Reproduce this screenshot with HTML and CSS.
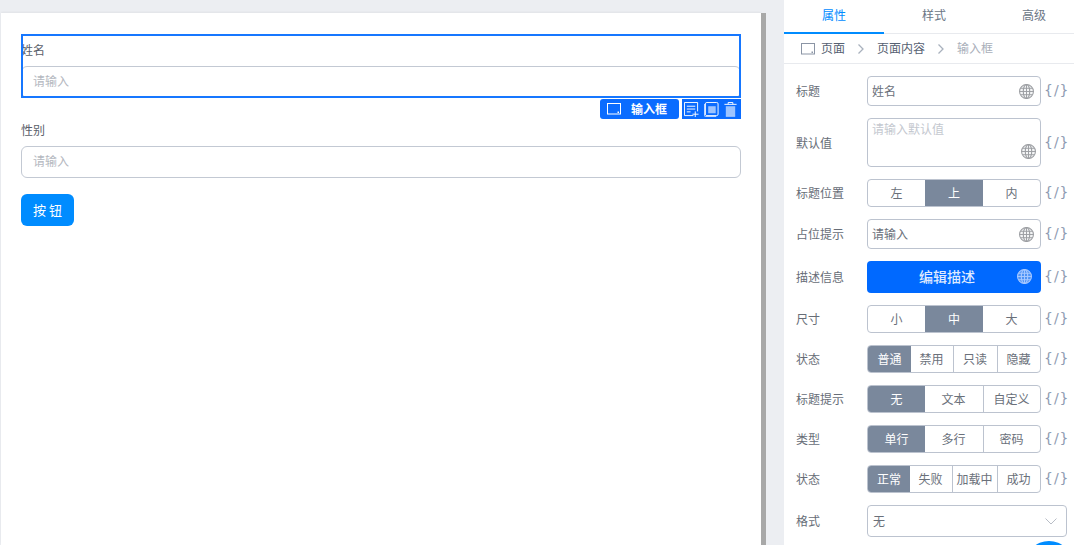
FILE: index.html
```html
<!DOCTYPE html>
<html lang="zh-CN">
<head>
<meta charset="utf-8">
<title>表单编辑器</title>
<link rel="stylesheet" href="styles.css">
</head>
<body>
<svg class="defs" width="0" height="0" aria-hidden="true">
  <symbol id="globe" viewBox="1 1 14 14">
    <circle cx="8" cy="8" r="6.500" fill="#dfe1e4" fill-opacity=".35" stroke="currentColor"/>
    <ellipse cx="8" cy="8" rx="3" ry="6.500" fill="none" stroke="currentColor"/>
    <path d="M8 1.500v13M2.500 5h11M1.500 8h13M2.500 11h11" fill="none" stroke="currentColor" stroke-width=".9"/>
  </symbol>
  <symbol id="frame" viewBox="0 0 14 12">
    <rect x=".5" y=".5" width="13" height="10.500" fill="none" stroke="currentColor"/>
    <rect x="10.500" y="8.500" width="1.500" height="1.500" fill="currentColor"/>
  </symbol>
  <symbol id="chev" viewBox="0 0 8 12">
    <path d="M1.500 1.500 6 6l-4.500 4.500" fill="none" stroke="currentColor" stroke-width="1.300"/>
  </symbol>
</svg>
<div class="app">
  <main class="canvas">
    <div class="field selected-field">
      <div class="field-label">姓名</div>
      <div class="text-input">请输入</div>
      <div class="selection">
        <div class="toolbar">
          <div class="tool-name"><svg class="tool-frame"><use href="#frame"/></svg><span>输入框</span></div>
          <div class="tool-actions">
            <svg class="tool-icon" viewBox="0 0 16 16"><path d="M10 14.500H.5V.5h14V10M3 4.500h9M3 7.500h9M3 10.500h4M12 10v6M9 13h6.500" fill="none" stroke="currentColor"/></svg>
            <svg class="tool-icon" viewBox="0 0 16 16"><rect x="1.500" y=".5" width="13.500" height="14" rx="1.500" fill="none" stroke="currentColor"/><path d="M.5 2v12.500q0 1 1 1H13" stroke="#cfe0ff" fill="none"/><rect x="4.500" y="4.500" width="8" height="7.500" fill="#9cc4ff"/></svg>
            <svg class="tool-icon" viewBox="0 0 16 16"><path d="M1.500 2.500h13M5.500 2.500V.5h5v2" fill="none" stroke="currentColor"/><path d="M3 4.500h10v10H3z" fill="#9cc4ff"/><path d="M3 15h10" stroke="currentColor"/></svg>
          </div>
        </div>
      </div>
    </div>
    <div class="field">
      <div class="field-label">性别</div>
      <div class="text-input">请输入</div>
    </div>
    <button class="primary-button">按 钮</button>
  </main>
  <div class="scrollbar"></div>
  <aside class="panel">
    <nav class="tabs">
      <div class="tab active">属性</div>
      <div class="tab">样式</div>
      <div class="tab">高级</div>
    </nav>
    <div class="crumbs">
      <svg class="crumb-frame"><use href="#frame"/></svg>
      <span class="crumb">页面</span>
      <svg class="crumb-chev"><use href="#chev"/></svg>
      <span class="crumb">页面内容</span>
      <svg class="crumb-chev"><use href="#chev"/></svg>
      <span class="crumb current">输入框</span>
    </div>
    <div class="props">
      <div class="row h30">
        <label class="prop-label">标题</label>
        <div class="box"><span>姓名</span><svg class="globe"><use href="#globe"/></svg></div>
        <span class="code">{/}</span>
      </div>
      <div class="row h49">
        <label class="prop-label">默认值</label>
        <div class="box area"><span class="ph">请输入默认值</span><svg class="globe"><use href="#globe"/></svg></div>
        <span class="code">{/}</span>
      </div>
      <div class="row h28">
        <label class="prop-label">标题位置</label>
        <div class="seg three"><span>左</span><span class="on">上</span><span>内</span></div>
        <span class="code">{/}</span>
      </div>
      <div class="row h30">
        <label class="prop-label">占位提示</label>
        <div class="box"><span>请输入</span><svg class="globe"><use href="#globe"/></svg></div>
        <span class="code">{/}</span>
      </div>
      <div class="row h32">
        <label class="prop-label">描述信息</label>
        <div class="edit-btn"><span>编辑描述</span><svg class="globe"><use href="#globe"/></svg></div>
        <span class="code">{/}</span>
      </div>
      <div class="row h28">
        <label class="prop-label">尺寸</label>
        <div class="seg three"><span>小</span><span class="on">中</span><span>大</span></div>
        <span class="code">{/}</span>
      </div>
      <div class="row h28">
        <label class="prop-label">状态</label>
        <div class="seg four"><span class="on">普通</span><span>禁用</span><span>只读</span><span>隐藏</span></div>
        <span class="code">{/}</span>
      </div>
      <div class="row h28">
        <label class="prop-label">标题提示</label>
        <div class="seg three"><span class="on">无</span><span>文本</span><span>自定义</span></div>
        <span class="code">{/}</span>
      </div>
      <div class="row h28">
        <label class="prop-label">类型</label>
        <div class="seg three"><span class="on">单行</span><span>多行</span><span>密码</span></div>
        <span class="code">{/}</span>
      </div>
      <div class="row h28">
        <label class="prop-label">状态</label>
        <div class="seg load"><span class="on">正常</span><span>失败</span><span>加载中</span><span>成功</span></div>
        <span class="code">{/}</span>
      </div>
      <div class="row h32">
        <label class="prop-label">格式</label>
        <div class="box select"><span>无</span>
          <svg class="select-arrow" viewBox="0 0 12 7"><path d="M.5.500 6 6 11.500.500" fill="none" stroke="currentColor"/></svg>
        </div>
      </div>
    </div>
    <div class="fab"></div>
  </aside>
</div>
</body>
</html>
```
FILE: styles.css
```css
* { box-sizing: border-box; }
html, body { margin: 0; height: 100%; overflow: hidden; }
body {
  background: #eceef2;
  font-family: "Noto Sans CJK SC", "Noto Sans", sans-serif;
  font-size: 12px;
  color: #5c6470;
}
.defs { position: absolute; }
.app { display: flex; height: 545px; padding-left: 1px; }

.canvas {
  width: 760px;
  margin-top: 13px;
  padding: 21px 20px 0;
  background: #fff;
  display: flex;
  flex-direction: column;
  align-items: flex-start;
  gap: 16px;
  box-shadow: 0 -1px 2px rgba(0, 0, 0, .05);
}
.field { width: 720px; height: 64px; position: relative; }
.field-label { height: 32px; line-height: 32px; color: #5a606a; }
.text-input {
  height: 32px;
  padding: 0 11px;
  line-height: 28px;
  border: 1px solid #c3c9d3;
  border-radius: 6px;
  color: #b4b8c0;
}
.selection { position: absolute; inset: 0; border: 2px solid #1677ff; }
.toolbar {
  position: absolute;
  top: 63px;
  right: -2px;
  display: flex;
  gap: 3px;
  color: #fff;
}
.tool-name {
  width: 79px;
  height: 20px;
  padding: 0 0 1px 7px;
  display: flex;
  align-items: center;
  gap: 10px;
  background: #0a6cff;
  border-radius: 3px;
  font-weight: 700;
}
.tool-frame { width: 14px; height: 12px; }
.tool-actions {
  width: 59px;
  height: 20px;
  padding: 0 3px 0 2px;
  display: flex;
  align-items: center;
  justify-content: space-between;
  background: #0a6cff;
}
.tool-icon { width: 15px; height: 15px; }
.primary-button {
  width: 53px;
  height: 32px;
  padding: 0 0 1px;
  border: 0;
  border-radius: 6px;
  background: #008cff;
  color: #fff;
  font: inherit;
  font-size: 13px;
}

.scrollbar { width: 5px; margin-top: 13px; background: #a8a8a8; }

.panel {
  width: 290px;
  margin-left: 18px;
  background: #fff;
  position: relative;
  overflow: hidden;
}
.tabs { display: flex; height: 34px; border-bottom: 1px solid #e8eaee; }
.tab {
  flex: none;
  width: 100px;
  height: 34px;
  line-height: 30px;
  text-align: center;
  color: #6b7686;
}
.tab.active { color: #008cff; border-bottom: 2px solid #008cff; }
.crumbs {
  height: 30px;
  padding: 0 0 2px 17px;
  display: flex;
  align-items: center;
  border-bottom: 1px solid #e8eaee;
  color: #566172;
}
.crumb-frame { width: 14px; height: 12px; margin: 2px 6px 0 0; color: #8b95a5; }
.crumb.current { color: #a9afba; }
.crumb-chev { width: 8px; height: 12px; margin: 2px 12px 0; color: #a9b1bd; }

.props {
  padding: 12px 0 0 12px;
  display: flex;
  flex-direction: column;
  gap: 12px;
}
.row { display: flex; align-items: center; }
.h28 { height: 28px; }
.h30 { height: 30px; }
.h32 { height: 32px; }
.h49 { height: 49px; }
.prop-label { width: 71px; padding-bottom: 2px; color: #676d77; }
.h49 .prop-label { padding-bottom: 0; }
.box {
  width: 174px;
  height: 100%;
  padding: 0 4px 2px;
  border: 1px solid #bcc3cf;
  border-radius: 4px;
  display: flex;
  align-items: center;
  justify-content: space-between;
  color: #6a707a;
}
.box .globe { margin: 2px 2px 0 0; color: #9c9ea2; }
.globe { width: 15px; height: 15px; flex: none; }
.area { position: relative; align-items: flex-start; padding-top: 1px; }
.area .globe { position: absolute; right: 4px; bottom: 7px; margin: 0; }
.ph { color: #c4c8cf; }
.select { width: 200px; padding: 0 5px 2px; }
.select-arrow { width: 12px; height: 7px; margin: 2px 4px 0 0; color: #b8bdc6; }
.code {
  margin-left: 3px;
  width: 23px;
  padding-bottom: 2px;
  text-align: center;
  font-family: "DejaVu Sans", sans-serif;
  font-size: 14px;
  letter-spacing: 1px;
  color: #8e9bb2;
  white-space: nowrap;
}
.seg {
  width: 174px;
  height: 100%;
  display: grid;
  border: 1px solid #bcc3cf;
  border-radius: 4px;
  overflow: hidden;
  color: #6a707a;
}
.seg span {
  display: flex;
  align-items: center;
  justify-content: center;
  padding-bottom: 2px;
  border-left: 1px solid #bcc3cf;
}
.seg span:first-child { border-left: 0; }
.seg .on { background: #7a889c; color: #fff; border-left: 0; }
.seg .on + span { border-left: 0; }
.seg .on:first-child ~ span { padding-right: 1px; }
.three { grid-template-columns: 57px 58px 57px; }
.four { grid-template-columns: 43px 42px 44px 43px; }
.load { grid-template-columns: 42px 42px 45px 43px; }
.edit-btn {
  width: 174px;
  height: 100%;
  position: relative;
  padding: 0 14px 2px 0;
  background: #0069ff;
  border-radius: 4px;
  color: #dfeaff;
  font-size: 14px;
  font-weight: 500;
  display: flex;
  align-items: center;
  justify-content: center;
}
.edit-btn .globe { position: absolute; right: 9px; top: 8px; color: #a9c9ff; }
.fab {
  position: absolute;
  left: 241px;
  top: 541px;
  width: 48px;
  height: 48px;
  border-radius: 50%;
  background: #008cff;
}
```
